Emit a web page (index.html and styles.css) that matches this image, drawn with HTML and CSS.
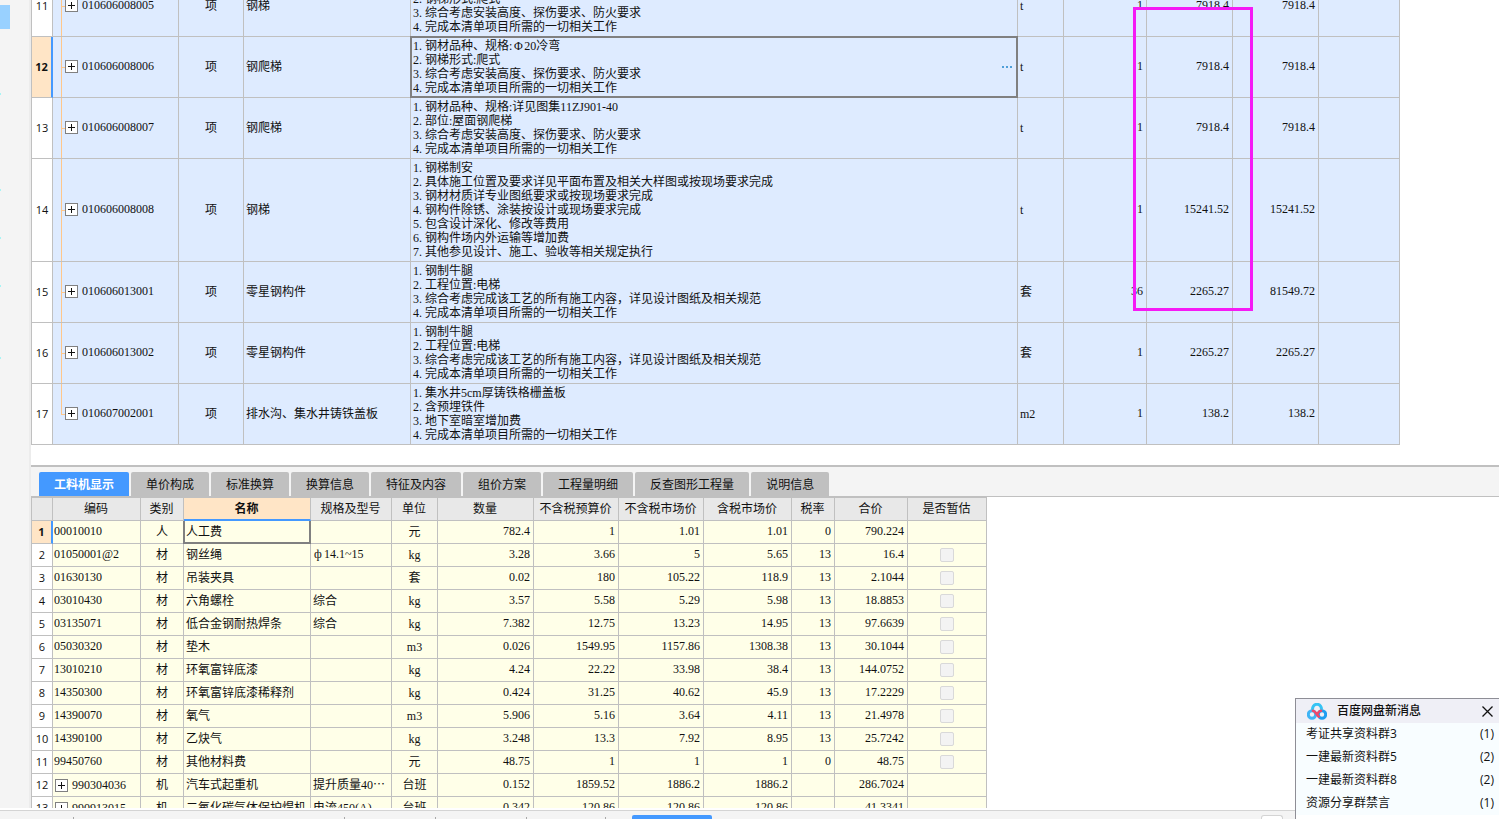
FILE: index.html
```html
<!DOCTYPE html>
<html lang="zh-CN">
<head>
<meta charset="utf-8">
<title>工料机显示</title>
<link rel="stylesheet" href="styles.css">
</head>
<body>
<div class="app">
  <aside class="rail"><div class="rail-item"></div></aside>
  <main class="main">
    <section class="bill-pane">
      <div class="bill-wrap">
        <table class="grid bill">
          <colgroup><col class="c-no"><col class="b-code"><col class="b-kind"><col class="b-name"><col class="b-desc"><col class="b-unit"><col class="b-qty"><col class="b-price"><col class="b-price"><col class="b-last"></colgroup>
          <tbody>
          <tr><th scope="row">11</th><td class="tree"><div class="node"><button class="plus" aria-label="展开"></button>010606008005</div></td><td class="mid">项</td><td>钢梯</td><td class="desc"><p><span class="n">2.</span>钢梯形式:爬式</p><p><span class="n">3.</span>综合考虑安装高度、探伤要求、防火要求</p><p><span class="n">4.</span>完成本清单项目所需的一切相关工作</p></td><td>t</td><td class="num">1</td><td class="num">7918.4</td><td class="num">7918.4</td><td></td></tr>
          <tr class="current"><th scope="row">12</th><td class="tree"><div class="node"><button class="plus" aria-label="展开"></button>010606008006</div></td><td class="mid">项</td><td>钢爬梯</td><td class="desc focus"><div class="editor"><div><p><span class="n">1.</span>钢材品种、规格:<span class="phi">Φ</span>20冷弯</p><p><span class="n">2.</span>钢梯形式:爬式</p><p><span class="n">3.</span>综合考虑安装高度、探伤要求、防火要求</p><p><span class="n">4.</span>完成本清单项目所需的一切相关工作</p></div><button class="more" aria-label="编辑"><i></i><i></i><i></i></button></div></td><td>t</td><td class="num">1</td><td class="num">7918.4</td><td class="num">7918.4</td><td></td></tr>
          <tr><th scope="row">13</th><td class="tree"><div class="node"><button class="plus" aria-label="展开"></button>010606008007</div></td><td class="mid">项</td><td>钢爬梯</td><td class="desc"><p><span class="n">1.</span>钢材品种、规格:详见图集11ZJ901-40</p><p><span class="n">2.</span>部位:屋面钢爬梯</p><p><span class="n">3.</span>综合考虑安装高度、探伤要求、防火要求</p><p><span class="n">4.</span>完成本清单项目所需的一切相关工作</p></td><td>t</td><td class="num">1</td><td class="num">7918.4</td><td class="num">7918.4</td><td></td></tr>
          <tr><th scope="row">14</th><td class="tree"><div class="node"><button class="plus" aria-label="展开"></button>010606008008</div></td><td class="mid">项</td><td>钢梯</td><td class="desc"><p><span class="n">1.</span>钢梯制安</p><p><span class="n">2.</span>具体施工位置及要求详见平面布置及相关大样图或按现场要求完成</p><p><span class="n">3.</span>钢材材质详专业图纸要求或按现场要求完成</p><p><span class="n">4.</span>钢构件除锈、涂装按设计或现场要求完成</p><p><span class="n">5.</span>包含设计深化、修改等费用</p><p><span class="n">6.</span>钢构件场内外运输等增加费</p><p><span class="n">7.</span>其他参见设计、施工、验收等相关规定执行</p></td><td>t</td><td class="num">1</td><td class="num">15241.52</td><td class="num">15241.52</td><td></td></tr>
          <tr><th scope="row">15</th><td class="tree"><div class="node"><button class="plus" aria-label="展开"></button>010606013001</div></td><td class="mid">项</td><td>零星钢构件</td><td class="desc"><p><span class="n">1.</span>钢制牛腿</p><p><span class="n">2.</span>工程位置:电梯</p><p><span class="n">3.</span>综合考虑完成该工艺的所有施工内容，详见设计图纸及相关规范</p><p><span class="n">4.</span>完成本清单项目所需的一切相关工作</p></td><td>套</td><td class="num">36</td><td class="num">2265.27</td><td class="num">81549.72</td><td></td></tr>
          <tr><th scope="row">16</th><td class="tree"><div class="node"><button class="plus" aria-label="展开"></button>010606013002</div></td><td class="mid">项</td><td>零星钢构件</td><td class="desc"><p><span class="n">1.</span>钢制牛腿</p><p><span class="n">2.</span>工程位置:电梯</p><p><span class="n">3.</span>综合考虑完成该工艺的所有施工内容，详见设计图纸及相关规范</p><p><span class="n">4.</span>完成本清单项目所需的一切相关工作</p></td><td>套</td><td class="num">1</td><td class="num">2265.27</td><td class="num">2265.27</td><td></td></tr>
          <tr><th scope="row">17</th><td class="tree tree-end"><div class="node"><button class="plus" aria-label="展开"></button>010607002001</div></td><td class="mid">项</td><td>排水沟、集水井铸铁盖板</td><td class="desc"><p><span class="n">1.</span>集水井5cm厚铸铁格栅盖板</p><p><span class="n">2.</span>含预埋铁件</p><p><span class="n">3.</span>地下室暗室增加费</p><p><span class="n">4.</span>完成本清单项目所需的一切相关工作</p></td><td>m2</td><td class="num">1</td><td class="num">138.2</td><td class="num">138.2</td><td></td></tr>
          </tbody>
        </table>
        <div class="mark"></div>
      </div>
    </section>
    <section class="detail-pane">
      <nav class="tabs">
        <button class="tab active">工料机显示</button><button class="tab">单价构成</button><button class="tab">标准换算</button><button class="tab">换算信息</button><button class="tab">特征及内容</button><button class="tab">组价方案</button><button class="tab">工程量明细</button><button class="tab">反查图形工程量</button><button class="tab">说明信息</button>
      </nav>
      <div class="detail-body">
        <table class="grid detail">
          <colgroup><col class="c-no"><col class="d-code"><col class="d-kind"><col class="d-name"><col class="d-spec"><col class="d-unit"><col class="d-qty"><col class="d-price"><col class="d-price"><col class="d-taxed"><col class="d-rate"><col class="d-sum"><col class="d-est"></colgroup>
          <thead><tr><td></td><th>编码</th><th>类别</th><th class="sel">名称</th><th>规格及型号</th><th>单位</th><th>数量</th><th>不含税预算价</th><th>不含税市场价</th><th>含税市场价</th><th>税率</th><th>合价</th><th>是否暂估</th></tr></thead>
          <tbody>
          <tr class="current"><th scope="row">1</th><td class="code">00010010</td><td class="mid">人</td><td class="focus">人工费</td><td></td><td class="mid">元</td><td class="num">782.4</td><td class="num">1</td><td class="num">1.01</td><td class="num">1.01</td><td class="num">0</td><td class="num">790.224</td><td></td></tr>
          <tr><th scope="row">2</th><td class="code">01050001@2</td><td class="mid">材</td><td>钢丝绳</td><td class="code"><span class="phi">ф</span>14.1~15</td><td class="mid">kg</td><td class="num">3.28</td><td class="num">3.66</td><td class="num">5</td><td class="num">5.65</td><td class="num">13</td><td class="num">16.4</td><td class="mid"><input type="checkbox" aria-label="是否暂估" disabled></td></tr>
          <tr><th scope="row">3</th><td class="code">01630130</td><td class="mid">材</td><td>吊装夹具</td><td></td><td class="mid">套</td><td class="num">0.02</td><td class="num">180</td><td class="num">105.22</td><td class="num">118.9</td><td class="num">13</td><td class="num">2.1044</td><td class="mid"><input type="checkbox" aria-label="是否暂估" disabled></td></tr>
          <tr><th scope="row">4</th><td class="code">03010430</td><td class="mid">材</td><td>六角螺栓</td><td>综合</td><td class="mid">kg</td><td class="num">3.57</td><td class="num">5.58</td><td class="num">5.29</td><td class="num">5.98</td><td class="num">13</td><td class="num">18.8853</td><td class="mid"><input type="checkbox" aria-label="是否暂估" disabled></td></tr>
          <tr><th scope="row">5</th><td class="code">03135071</td><td class="mid">材</td><td>低合金钢耐热焊条</td><td>综合</td><td class="mid">kg</td><td class="num">7.382</td><td class="num">12.75</td><td class="num">13.23</td><td class="num">14.95</td><td class="num">13</td><td class="num">97.6639</td><td class="mid"><input type="checkbox" aria-label="是否暂估" disabled></td></tr>
          <tr><th scope="row">6</th><td class="code">05030320</td><td class="mid">材</td><td>垫木</td><td></td><td class="mid">m3</td><td class="num">0.026</td><td class="num">1549.95</td><td class="num">1157.86</td><td class="num">1308.38</td><td class="num">13</td><td class="num">30.1044</td><td class="mid"><input type="checkbox" aria-label="是否暂估" disabled></td></tr>
          <tr><th scope="row">7</th><td class="code">13010210</td><td class="mid">材</td><td>环氧富锌底漆</td><td></td><td class="mid">kg</td><td class="num">4.24</td><td class="num">22.22</td><td class="num">33.98</td><td class="num">38.4</td><td class="num">13</td><td class="num">144.0752</td><td class="mid"><input type="checkbox" aria-label="是否暂估" disabled></td></tr>
          <tr><th scope="row">8</th><td class="code">14350300</td><td class="mid">材</td><td>环氧富锌底漆稀释剂</td><td></td><td class="mid">kg</td><td class="num">0.424</td><td class="num">31.25</td><td class="num">40.62</td><td class="num">45.9</td><td class="num">13</td><td class="num">17.2229</td><td class="mid"><input type="checkbox" aria-label="是否暂估" disabled></td></tr>
          <tr><th scope="row">9</th><td class="code">14390070</td><td class="mid">材</td><td>氧气</td><td></td><td class="mid">m3</td><td class="num">5.906</td><td class="num">5.16</td><td class="num">3.64</td><td class="num">4.11</td><td class="num">13</td><td class="num">21.4978</td><td class="mid"><input type="checkbox" aria-label="是否暂估" disabled></td></tr>
          <tr><th scope="row">10</th><td class="code">14390100</td><td class="mid">材</td><td>乙炔气</td><td></td><td class="mid">kg</td><td class="num">3.248</td><td class="num">13.3</td><td class="num">7.92</td><td class="num">8.95</td><td class="num">13</td><td class="num">25.7242</td><td class="mid"><input type="checkbox" aria-label="是否暂估" disabled></td></tr>
          <tr><th scope="row">11</th><td class="code">99450760</td><td class="mid">材</td><td>其他材料费</td><td></td><td class="mid">元</td><td class="num">48.75</td><td class="num">1</td><td class="num">1</td><td class="num">1</td><td class="num">0</td><td class="num">48.75</td><td class="mid"><input type="checkbox" aria-label="是否暂估" disabled></td></tr>
          <tr><th scope="row">12</th><td><div class="node"><button class="plus" aria-label="展开"></button>990304036</div></td><td class="mid">机</td><td>汽车式起重机</td><td>提升质量40⋯</td><td class="mid">台班</td><td class="num">0.152</td><td class="num">1859.52</td><td class="num">1886.2</td><td class="num">1886.2</td><td></td><td class="num">286.7024</td><td></td></tr>
          <tr><th scope="row">13</th><td><div class="node"><button class="plus" aria-label="展开"></button>990913015</div></td><td class="mid">机</td><td>二氧化碳气体保护焊机</td><td>电流450(A)</td><td class="mid">台班</td><td class="num">0.342</td><td class="num">120.86</td><td class="num">120.86</td><td class="num">120.86</td><td></td><td class="num">41.3341</td><td></td></tr>
          </tbody>
        </table>
      </div>
    </section>
  </main>
  <footer class="status">
    <span class="cell w1"></span><span class="cell w2"></span><span class="cell w3"></span><span class="cell w3"></span><span class="cell w4"></span><span class="status-tab"></span><span class="zoom-knob"></span>
  </footer>
</div>
<section class="toast">
  <header class="toast-head">
    <svg class="logo" viewBox="0 0 20 17" aria-hidden="true" fill="none" stroke-width="3">
      <circle cx="5" cy="11.500" r="3.700" stroke="#3fb4f5"/>
      <circle cx="15" cy="11.500" r="3.700" stroke="#1f9df0"/>
      <path d="M5.800 7A4.400 4.400 0 1 1 14.200 7" stroke="#35c3f4"/>
      <path d="M6 7.800C8.500 8 9 11 11.800 13.600M14 7.800C11.500 8 11 10 9.800 11.500" stroke="#f0486a" stroke-width="2.600" stroke-linecap="round"/>
    </svg>
    <h2>百度网盘新消息</h2>
    <button class="close" aria-label="关闭"><svg viewBox="0 0 11 11"><path d="M.5.5l10 10M10.500.5l-10 10" stroke="#111" stroke-width="1.300"/></svg></button>
  </header>
  <ul>
    <li><span>考证共享资料群3</span><span>(1)</span></li>
    <li><span>一建最新资料群5</span><span>(2)</span></li>
    <li><span>一建最新资料群8</span><span>(2)</span></li>
    <li><span>资源分享群禁言</span><span>(1)</span></li>
  </ul>
</section>
</body>
</html>
```

FILE: styles.css
```css
* { box-sizing: border-box; }

body {
  margin: 0;
  height: 100vh;
  overflow: hidden;
  background: #fff;
  color: #111;
  font: 12px/14px "Liberation Serif", "Noto Sans CJK SC", sans-serif;
}

button { margin: 0; padding: 0; border: 0; background: none; font: inherit; color: inherit; }
p, h2, ul { margin: 0; padding: 0; }

.app {
  height: 100%;
  display: grid;
  grid-template-columns: 31px minmax(0, 1fr);
  grid-template-rows: minmax(0, 1fr) 11px;
}

.rail {
  padding-top: 5px;
  border-right: 2px solid #ececec;
  background:
    linear-gradient(#a8f4f4, #a8f4f4) 0 93px / 1px 2px no-repeat,
    linear-gradient(#a8f4f4, #a8f4f4) 0 189px / 1px 2px no-repeat,
    linear-gradient(#a8f4f4, #a8f4f4) 0 237px / 1px 2px no-repeat,
    linear-gradient(#a8f4f4, #a8f4f4) 0 285px / 1px 2px no-repeat,
    linear-gradient(#a8f4f4, #a8f4f4) 0 357px / 1px 2px no-repeat,
    #f4f4f4;
}
.rail-item { width: 10px; height: 24px; background: #99d1ff; }

.main {
  display: grid;
  grid-template-rows: minmax(0, 465fr) minmax(0, 343fr);
}

/* Shared grid */
.grid {
  table-layout: fixed;
  border-spacing: 0;
  border-left: 1px solid #c0c0c0;
}
.grid td, .grid th {
  padding: 0 3px 0 2px;
  border-right: 1px solid #c0c0c0;
  border-bottom: 1px solid #c0c0c0;
  white-space: nowrap;
  text-align: left;
  font-weight: 400;
}
.grid .mid { padding: 0 2px; text-align: center; }
.grid .num { text-align: right; padding-bottom: 2px; }
.grid .code { padding-left: 1px; padding-bottom: 2px; }
.grid tbody th {
  padding: 0;
  background: #fff;
  text-align: center;
  font: 11px/14px "Open Sans", sans-serif;
}
.grid .current th {
  background: #ffe5c6;
  border-right: 2px solid #4499ff;
  font-weight: 700;
}
.grid .focus { position: relative; }
.grid .focus::after {
  content: "";
  position: absolute;
  inset: -1px;
  border: 2px solid #808080;
  pointer-events: none;
}
.detail .focus::after { top: 0; border-top: 0; }
.c-no { width: 21px; }
.phi { display: inline-block; width: 12px; text-align: center; }

.node { display: flex; align-items: center; gap: 4px; }
.plus {
  flex: none;
  width: 13px;
  height: 13px;
  border: 1px solid #808080;
  background:
    linear-gradient(#111, #111) center / 7px 1px no-repeat,
    linear-gradient(#111, #111) center / 1px 7px no-repeat,
    #fff;
}

/* Bill of quantities */
.bill-pane {
  display: flex;
  flex-direction: column;
  justify-content: flex-end;
  overflow: hidden;
  padding-bottom: 20px;
}
.bill-wrap { position: relative; flex: none; }
.bill { width: 1369px; }
.bill td { height: 61px; background: #deebff; }
.b-code { width: 126px; }
.b-kind { width: 65px; }
.b-name { width: 167px; }
.b-desc { width: 607px; }
.b-unit { width: 46px; }
.b-qty { width: 83px; }
.b-price { width: 86px; }
.b-last { width: 81px; }

.bill .tree {
  padding-left: 12px;
  padding-bottom: 2px;
  background:
    linear-gradient(#ffc78a, #ffc78a) 8px 0 / 1px 100% no-repeat,
    linear-gradient(#ffc78a, #ffc78a) 8px 50% / 4px 1px no-repeat,
    #deebff;
}
.bill .tree-end {
  background:
    linear-gradient(#ffc78a, #ffc78a) 8px 0 / 1px 50% no-repeat,
    linear-gradient(#ffc78a, #ffc78a) 8px 50% / 4px 1px no-repeat,
    #deebff;
}
.bill .desc { vertical-align: bottom; padding-top: 2px; padding-bottom: 2px; }
.n { display: inline-block; width: 12px; }
.editor { display: flex; align-items: center; justify-content: space-between; }
.more { display: flex; gap: 2px; padding: 4px 2px; }
.more i { width: 2px; height: 2px; background: #4f9fd8; }

.mark {
  position: absolute;
  left: 1102px;
  bottom: 134px;
  width: 120px;
  height: 304px;
  border: 3px solid #f51af5;
}

/* Resource detail */
.detail-pane {
  display: flex;
  flex-direction: column;
  border-top: 2px solid #c0c0c0;
}
.tabs {
  display: flex;
  gap: 2px;
  padding: 5px 8px 0;
  background: #f4f4f4;
  border-bottom: 1px solid #c0c0c0;
}
.tab {
  height: 24px;
  padding: 0 15px;
  border-radius: 2px 2px 0 0;
  background: #c0c0c0;
  font-family: "Noto Sans CJK SC", sans-serif;
}
.tab.active { background: #4499ff; color: #fff; font-weight: 700; }

.detail-body { flex: 1; min-height: 0; overflow: hidden; }
.detail { width: 956px; border-top: 1px solid #c0c0c0; }
.detail td, .detail th { height: 23px; }
.detail td { background: #ffffe8; }
.detail thead td, .detail thead th { background: #e8e8e8; text-align: center; padding: 0 1px 0 0; }
.detail thead .sel { background: #ffe5c6; border-bottom: 2px solid #4499ff; font-weight: 700; }
.d-code { width: 88px; }
.d-kind { width: 43px; }
.d-name { width: 127px; }
.d-spec { width: 81px; }
.d-unit { width: 46px; }
.d-qty { width: 96px; }
.d-price { width: 85px; }
.d-taxed { width: 88px; }
.d-rate { width: 43px; }
.d-sum { width: 73px; }
.d-est { width: 79px; }
.detail input {
  appearance: none;
  display: block;
  width: 14px;
  height: 14px;
  margin: 0 auto;
  border: 1px solid #d9d9d9;
  border-radius: 2px;
  background: #f3f3f3;
}

/* Bottom strip */
.status {
  grid-column: 1 / -1;
  display: flex;
  align-items: flex-end;
  margin-top: 2px;
  border-top: 1px solid #d4d4d4;
  background: #f4f4f4;
}
.cell { height: 2px; border-right: 1px solid #a8a8a8; }
.w1 { width: 74px; }
.w2 { width: 271px; }
.w3 { width: 91px; }
.w4 { width: 79px; }
.status-tab { width: 80px; height: 4px; margin-left: 26px; border-radius: 2px 2px 0 0; background: #4499ff; }
.zoom-knob {
  width: 22px;
  height: 4px;
  margin: 0 216px 0 auto;
  border: 1px solid #d4d4d4;
  border-bottom: 0;
  border-radius: 3px 3px 0 0;
  background: #fff;
}

/* Message popup */
.toast {
  position: absolute;
  right: 0;
  bottom: 0;
  width: 204px;
  padding-bottom: 4px;
  border: solid #8e8e96;
  border-width: 1px 0 0 1px;
  background: #fff;
  font-family: "Open Sans", "Noto Sans CJK SC", sans-serif;
}
.toast-head {
  display: flex;
  align-items: center;
  height: 24px;
  padding: 0 6px 0 11px;
  background: #efeff6;
}
.logo { width: 20px; height: 17px; }
.toast h2 { margin-left: 10px; font-size: 12px; line-height: 24px; font-weight: 500; }
.close { display: flex; margin-left: auto; }
.close svg { width: 11px; height: 11px; }
.toast ul { list-style: none; background: #f8fdff; }
.toast li {
  display: flex;
  justify-content: space-between;
  padding: 1px 5px 2px 10px;
  line-height: 20px;
}
```
